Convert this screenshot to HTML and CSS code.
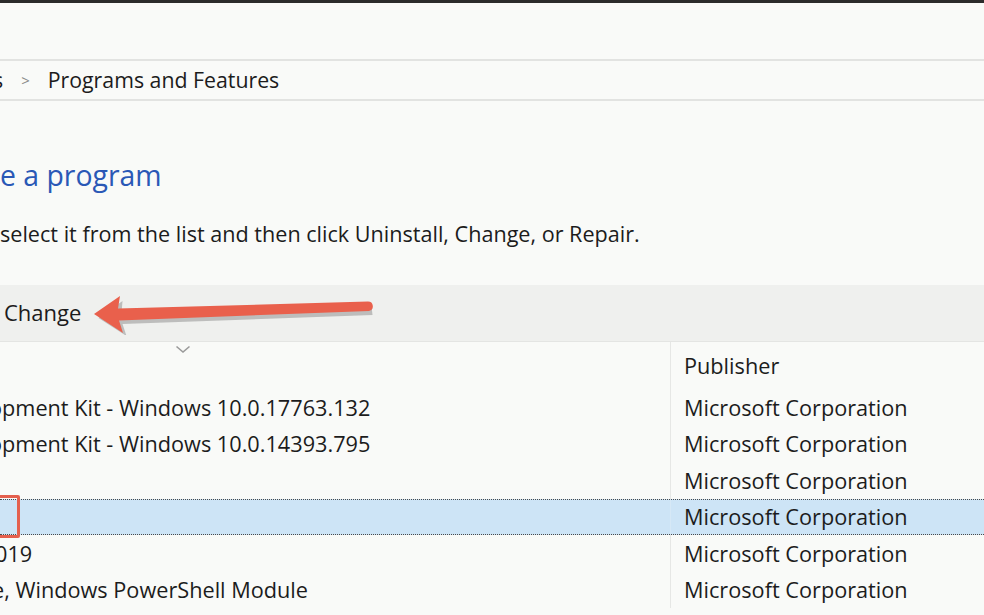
FILE: index.html
```html
<!DOCTYPE html>
<html>
<head>
<meta charset="utf-8">
<link rel="stylesheet" href="styles.css">
</head>
<body>
<div class="topbar"></div>
<div class="address-gap"></div>
<div class="breadcrumb">
  <span class="crumb crumb-cut">s</span>
  <span class="crumb-sep">&gt;</span>
  <span class="crumb">Programs and Features</span>
</div>
<h1 class="title">e a program</h1>
<p class="subtitle">select it from the list and then click Uninstall, Change, or Repair.</p>
<div class="toolbar">
  <span class="tool">Change</span>
  <svg class="arrow" width="300" height="50" viewBox="0 0 300 50">
    <g transform="translate(-85,-285)">
      <path d="M97 316 L121 299 L120 311 L370 304 L371 313 L121 322 L125 334 Z" fill="#4a4a4a" opacity="0.3" transform="translate(1.5,2)"/>
      <path d="M94 314 L120 296 L118 308.5 L368 301.5 A4.8 4.8 0 0 1 369 311 L119 320.5 L123 333 Z" fill="#e9604c"/>
    </g>
  </svg>
</div>
<div class="list">
  <div class="row header">
    <div class="cell name"><svg class="sort" width="16" height="9" viewBox="0 0 16 9"><path d="M1.5 1.5 L8 7 L14.5 1.5" fill="none" stroke="#9a9a9a" stroke-width="1.6"/></svg></div>
    <div class="cell pub">Publisher</div>
  </div>
  <div class="row">
    <div class="cell name sdk">opment Kit - Windows 10.0.17763.132</div>
    <div class="cell pub">Microsoft Corporation</div>
  </div>
  <div class="row">
    <div class="cell name sdk">opment Kit - Windows 10.0.14393.795</div>
    <div class="cell pub">Microsoft Corporation</div>
  </div>
  <div class="row">
    <div class="cell name"></div>
    <div class="cell pub">Microsoft Corporation</div>
  </div>
  <div class="row selected">
    <div class="cell name"><span class="mark"></span></div>
    <div class="cell pub">Microsoft Corporation</div>
  </div>
  <div class="row">
    <div class="cell name year">019</div>
    <div class="cell pub">Microsoft Corporation</div>
  </div>
  <div class="row">
    <div class="cell name ps">e, Windows PowerShell Module</div>
    <div class="cell pub">Microsoft Corporation</div>
  </div>
</div>
</body>
</html>
```

FILE: styles.css
```css
html, body {
  margin: 0;
  padding: 0;
  background: #f9faf8;
  overflow: hidden;
}
body {
  width: 984px;
  height: 615px;
  font-family: "Open Sans", "Noto Sans", sans-serif;
  color: #1c1c1c;
  font-size: 21.6px;
}
.topbar {
  height: 3px;
  background: #2b2b2b;
}
.address-gap {
  height: 56px;
}
.breadcrumb {
  height: 38px;
  border-top: 2px solid #e2e3e1;
  border-bottom: 2px solid #e2e3e1;
  display: flex;
  align-items: center;
  white-space: nowrap;
}
.crumb {
  font-size: 21.3px;
  line-height: 38px;
}
.crumb-cut {
  margin-left: -7px;
}
.crumb-sep {
  color: #8a8a8a;
  font-size: 15px;
  margin: 0 18px 0 18px;
}
.title {
  margin: 56px 0 0 0;
  font-weight: normal;
  font-size: 28.4px;
  line-height: 36px;
  color: #2a58b6;
  white-space: nowrap;
}
.subtitle {
  margin: 27px 0 0 0;
  font-size: 21.6px;
  line-height: 28px;
  white-space: nowrap;
}
.toolbar {
  margin-top: 37px;
  height: 56px;
  background: #eff0ee;
  border-bottom: 1px solid #e4e5e3;
  display: flex;
  align-items: center;
  position: relative;
}
.tool {
  margin-left: 4px;
  margin-bottom: 3px;
  font-size: 22px;
}
.arrow {
  position: absolute;
  left: 85px;
  top: 0;
}
.list {
  display: flex;
  flex-direction: column;
}
.row {
  display: grid;
  grid-template-columns: 670px 1fr;
  height: 36.5px;
  position: relative;
  white-space: nowrap;
}
.row.header {
  height: 47px;
}
.cell {
  display: flex;
  align-items: center;
  font-size: 21.7px;
}
.cell.sdk {
  margin-left: -11px;
}
.cell.year {
  margin-left: -5px;
}
.cell.ps {
  margin-left: -8px;
}
.cell.pub {
  border-left: 1px solid #e6e7e5;
  padding-left: 13px;
}
.header .cell.name {
  align-items: flex-start;
}
.header .cell.pub {
  padding-bottom: 1px;
}
.sort {
  margin-left: 175px;
  margin-top: 3px;
}
.row.selected {
  background: #cde4f6;
  border-top: 1px dotted #4a4a4a;
  border-bottom: 1px dotted #4a4a4a;
  height: 34.5px;
}
.row.selected .cell.pub {
  border-left-color: #d6e8f6;
}
.mark {
  position: absolute;
  left: -6px;
  top: -5px;
  width: 20px;
  height: 37px;
  border: 3px solid #e4604e;
  border-radius: 2px;
}
```
